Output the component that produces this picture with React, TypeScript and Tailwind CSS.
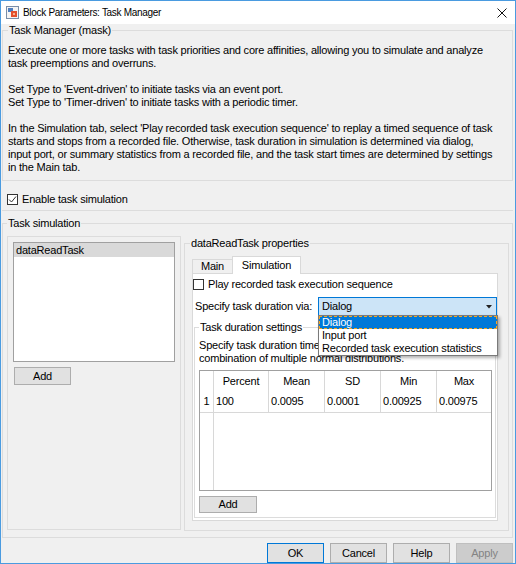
import React from 'react';

const descLines = [
  'Execute one or more tasks with task priorities and core affinities, allowing you to simulate and analyze',
  'task preemptions and overruns.',
  '',
  "Set Type to 'Event-driven' to initiate tasks via an event port.",
  "Set Type to 'Timer-driven' to initiate tasks with a periodic timer.",
  '',
  "In the Simulation tab, select 'Play recorded task execution sequence' to replay a timed sequence of task",
  'starts and stops from a recorded file. Otherwise, task duration in simulation is determined via dialog,',
  'input port, or summary statistics from a recorded file, and the task start times are determined by settings',
  'in the Main tab.',
];

const columns = [
  { name: 'Percent', value: '100', w: 'w-[55px] border-r' },
  { name: 'Mean', value: '0.0095', w: 'w-[56px] border-r' },
  { name: 'SD', value: '0.0001', w: 'w-[56px] border-r' },
  { name: 'Min', value: '0.00925', w: 'w-[56px] border-r' },
  { name: 'Max', value: '0.00975', w: 'w-[54px]' },
];

function CheckBox({ checked }: { checked?: boolean }) {
  return (
    <span className="w-[11px] h-[11px] border border-[#333333] bg-white flex items-center justify-center shrink-0">
      {checked && (
        <svg width="9" height="9" viewBox="0 0 9 9">
          <path d="M1 4.5 L3.5 7 L8 1.5" fill="none" stroke="#333333" strokeWidth="1" />
        </svg>
      )}
    </span>
  );
}

function Btn({ label, kind }: { label: string; kind?: 'ok' | 'disabled' }) {
  let cls = 'bg-[#e1e1e1] border-[#adadad] text-black';
  if (kind === 'ok') cls = 'bg-[#e1e1e1] border-[#0078d7] text-black';
  if (kind === 'disabled') cls = 'bg-[#cccccc] border-[#bfbfbf] text-[#838383]';
  return (
    <div className={`w-[57px] h-[20px] border flex items-center justify-center ${cls}`}>{label}</div>
  );
}

export default function App() {
  return (
    <div className="w-[516px] h-[564px] border border-[#4a9be0] bg-[#f0f0f0] flex flex-col text-[11px] leading-[13px] tracking-[-0.2px] text-black font-['Liberation_Sans',Arial,sans-serif] overflow-hidden">
      {/* title bar */}
      <div className="h-[23px] bg-white flex items-center shrink-0">
        <svg className="ml-[5px]" width="13" height="13" viewBox="0 0 13 13">
          <rect x="0.5" y="0.5" width="12" height="12" fill="#f4f4f4" stroke="#7a8ea8" />
          <rect x="2" y="2" width="5" height="4" fill="#4f7fc0" />
          <rect x="5" y="5" width="6" height="6" fill="#e4502c" />
          <rect x="7" y="7" width="2" height="2" fill="#f7b08f" />
        </svg>
        <span className="ml-[4px] text-[10px] tracking-[-0.3px]">Block Parameters: Task Manager</span>
        <svg className="ml-auto mr-[8px]" width="10" height="10" viewBox="0 0 10 10">
          <path d="M0.5 0.5 L9.5 9.5 M9.5 0.5 L0.5 9.5" stroke="#111" strokeWidth="1" />
        </svg>
      </div>

      {/* body */}
      <div className="flex-1 flex flex-col">
        <fieldset className="ml-[1px] w-[511px] border border-[#dcdcdc] pl-[5px] pt-[8px] pb-[6px]">
          <legend className="px-[1px] leading-[12px]">Task Manager (mask)</legend>
          {descLines.map((l, i) => (
            <div key={i} className="h-[13px] whitespace-nowrap">
              {l}
            </div>
          ))}
        </fieldset>

        <div className="ml-[1px] w-[511px] h-[30px] border-b border-[#dcdcdc] pt-[7px] pl-[5px] flex items-center gap-[4px]">
          <CheckBox checked />
          <span>Enable task simulation</span>
        </div>

        <fieldset className="mt-[6px] ml-[1px] w-[511px] border border-[#dcdcdc] pl-[4px] pt-[7px] pb-[6px]">
          <legend className="px-[1px] leading-[12px]">Task simulation</legend>
          <div className="flex items-start gap-[3px]">
            {/* task list */}
            <div className="w-[174px] h-[294px] border border-[#dcdcdc] pl-[5px] pt-[5px]">
              <div className="w-[162px] h-[120px] border border-[#a0a0a0] bg-white">
                <div className="h-[14px] bg-[#d9d9d9] pl-[2px] flex items-center">dataReadTask</div>
              </div>
              <div className="mt-[5px] ml-[1px] w-[57px] h-[18px] bg-[#e1e1e1] border border-[#adadad] flex items-center justify-center">
                Add
              </div>
            </div>

            {/* properties */}
            <fieldset className="mt-[1px] w-[325px] h-[294px] border border-[#dcdcdc] pl-[7px] pt-[7px] pb-[9px]">
              <legend className="-ml-[2px] px-[1px] leading-[12px]">dataReadTask properties</legend>
              <div className="flex items-end h-[17px]">
                <div className="w-[41px] h-[14px] border border-b-0 border-[#d9d9d9] bg-[#f0f0f0] flex items-center justify-center">
                  Main
                </div>
                <div className="relative z-10 -ml-px -mb-px w-[69px] h-[18px] border border-b-0 border-[#d9d9d9] bg-white flex items-center justify-center">
                  Simulation
                </div>
              </div>
              <div className="w-[306px] h-[248px] border border-[#d9d9d9] bg-white flex flex-col">
                <div className="mt-[5px] flex items-center gap-[4px] h-[11px]">
                  <CheckBox />
                  <span>Play recorded task execution sequence</span>
                </div>
                <div className="mt-[7px] flex items-center h-[19px]">
                  <span className="ml-[2px]">Specify task duration via:</span>
                  <div className="relative ml-auto">
                    <div className="w-[179px] h-[19px] bg-[#cce4f7] border border-[#0078d7] flex items-center pl-[3px] pr-[4px]">
                      <span>Dialog</span>
                      <svg className="ml-auto" width="6" height="4" viewBox="0 0 6 4">
                        <path d="M0 0 H6 L3 3.5 Z" fill="#222" />
                      </svg>
                    </div>
                    <div className="absolute z-20 left-0 top-[18px] w-[180px] bg-white border border-[#7a7a7a] shadow-[2px_2px_3px_rgba(0,0,0,0.3)]">
                      <div className="h-[13px] bg-[#0078d7] text-white border border-dashed border-[#f5a623] pl-[2px] flex items-center">
                        Dialog
                      </div>
                      <div className="h-[13px] pl-[3px] flex items-center">Input port</div>
                      <div className="h-[13px] pl-[3px] flex items-center">Recorded task execution statistics</div>
                    </div>
                  </div>
                </div>

                <fieldset className="mt-[5px] ml-[1px] w-[302px] border border-[#dcdcdc] pl-[4px] pr-[2px] pt-[6px] pb-[4px]">
                  <legend className="px-[1px] leading-[12px]">Task duration settings</legend>
                  <div className="h-[13px] whitespace-nowrap">Specify task duration time as a normal distribution or a</div>
                  <div className="h-[13px] whitespace-nowrap">combination of multiple normal distributions.</div>
                  <div className="mt-[5px] w-[293px] h-[121px] border border-[#a0a0a0] bg-white flex flex-col">
                    <div className="flex h-[20px]">
                      <div className="w-[14px] border-r border-[#d8d8d8]" />
                      {columns.map((c) => (
                        <div key={c.name} className={`${c.w} border-[#d8d8d8] flex items-center justify-center`}>
                          {c.name}
                        </div>
                      ))}
                    </div>
                    <div className="flex h-[22px] border-b border-[#d8d8d8]">
                      <div className="w-[14px] border-r border-[#d8d8d8] flex items-center justify-center">1</div>
                      {columns.map((c) => (
                        <div key={c.name} className={`${c.w} border-[#d8d8d8] flex items-center pl-[2px]`}>
                          {c.value}
                        </div>
                      ))}
                    </div>
                    <div className="flex-1 flex">
                      <div className="w-[14px] border-r border-[#d8d8d8]" />
                    </div>
                  </div>
                  <div className="mt-[5px] w-[58px] h-[17px] bg-[#e1e1e1] border border-[#adadad] flex items-center justify-center">
                    Add
                  </div>
                </fieldset>
              </div>
            </fieldset>
          </div>
        </fieldset>

        <div className="mt-[5px] flex justify-end gap-[6px] pr-[2px]">
          <Btn label="OK" kind="ok" />
          <Btn label="Cancel" />
          <Btn label="Help" />
          <Btn label="Apply" kind="disabled" />
        </div>
      </div>
    </div>
  );
}
